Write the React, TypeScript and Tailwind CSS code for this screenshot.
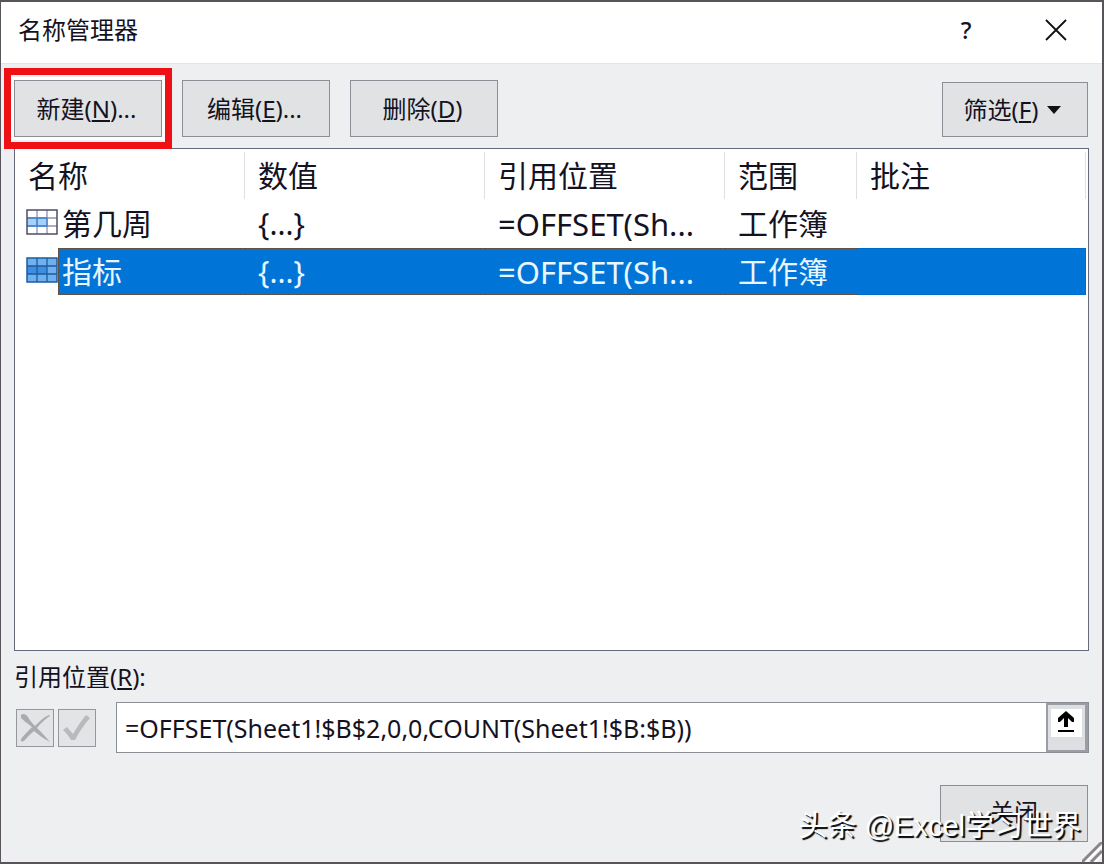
import type { ReactNode } from "react";

const columns = [
  { title: "名称", width: "w-[230px]" },
  { title: "数值", width: "w-[240px]" },
  { title: "引用位置", width: "w-[240px]" },
  { title: "范围", width: "w-[132px]" },
  { title: "批注", width: "" },
];

const names = [
  { name: "第几周", value: "{...}", refersTo: "=OFFSET(Sh...", scope: "工作簿", comment: "", selected: false },
  { name: "指标", value: "{...}", refersTo: "=OFFSET(Sh...", scope: "工作簿", comment: "", selected: true },
];

const buttonStyle = "border border-[#8b8e95] bg-[#e1e2e3] text-2xl leading-8 text-[#14121f]";

function Hotkey({ letter }: { letter: string }) {
  return (
    <>
      (<span className="underline decoration-2 underline-offset-2">{letter}</span>)
    </>
  );
}

function DialogButton({ children }: { children: ReactNode }) {
  return <button className={`h-[57px] w-[148px] pr-[3px] ${buttonStyle}`}>{children}</button>;
}

function RangeIcon({ selected }: { selected: boolean }) {
  return (
    <svg width="32" height="26" viewBox="0 0 32 26" className="mb-1 shrink-0" aria-hidden="true">
      <rect x="1" y="1" width="30" height="24" fill={selected ? "#6eb1ee" : "#ffffff"} />
      <rect x="1" y="9" width="20" height="8" fill={selected ? "#3c8fdf" : "#a5d0f7"} />
      <path
        d="M1 9H31M1 17H31M11 1V25M21 1V25"
        stroke={selected ? "#1f5ba0" : "#8d92b4"}
        strokeWidth="1.3"
        fill="none"
      />
      {!selected && <path d="M1 9H21V17H1M11 9V17" stroke="#3d82cf" strokeWidth="1.3" fill="none" />}
      <rect x="1" y="1" width="30" height="24" fill="none" stroke={selected ? "#1f5ba0" : "#4e4c67"} strokeWidth="1.5" />
    </svg>
  );
}

function TitleBar() {
  return (
    <header className="flex h-[62px] shrink-0 items-center border-b border-[#dfe5e9] bg-white pr-[26px] pb-[5px] pl-[17px]">
      <h1 className="flex-1 text-2xl leading-8">名称管理器</h1>
      <button aria-label="帮助" className="w-10 text-2xl leading-8 font-medium">
        ?
      </button>
      <button aria-label="关闭窗口" className="ml-[50px] flex h-10 w-10 items-center justify-center">
        <svg width="22" height="22" viewBox="0 0 22 22">
          <path d="M1 1L21 21M21 1L1 21" stroke="#111" strokeWidth="1.8" fill="none" />
        </svg>
      </button>
    </header>
  );
}

function NameList() {
  return (
    <div className="flex-1 border border-[#666a7c] bg-white pr-[2px]">
      <table className="w-full table-fixed border-separate border-spacing-0 text-left text-3xl leading-10">
        <thead>
          <tr className="h-[51px]">
            {columns.map((col) => (
              <th key={col.title} className={`p-0 font-normal ${col.width}`}>
                <div className="mt-[2px] h-[47px] border-r border-[#dde1e6] pt-1 pl-[13px]">{col.title}</div>
              </th>
            ))}
          </tr>
        </thead>
        <tbody>
          {names.map((row) => {
            const cell = row.selected
              ? "h-[47px] border-y border-dotted border-[#5a4a3c] bg-[#0075d7] p-0 pl-[13px] text-[#e8f7ff]"
              : "h-12 p-0 pl-[13px]";

            return (
              <tr key={row.name} aria-selected={row.selected}>
                <td className="p-0 pl-[11px]">
                  <div className="flex items-center">
                    <RangeIcon selected={row.selected} />
                    <span
                      className={
                        row.selected
                          ? "flex h-[47px] flex-1 items-center border-y border-l border-dotted border-[#5a4a3c] bg-[#0075d7] pl-[3px] text-[#e8f7ff]"
                          : "flex h-12 flex-1 items-center pl-1"
                      }
                    >
                      {row.name}
                    </span>
                  </div>
                </td>
                <td className={cell}>{row.value}</td>
                <td className={`${cell} text-[31px]`}>{row.refersTo}</td>
                <td className={cell}>{row.scope}</td>
                <td className={row.selected ? `${cell} border-r` : cell}>{row.comment}</td>
              </tr>
            );
          })}
        </tbody>
      </table>
    </div>
  );
}

function RefersToBar() {
  return (
    <div className="mt-[9px] flex items-center">
      <div className="ml-[2px] flex gap-1">
        <button aria-label="取消" className="flex h-[38px] w-[38px] items-center justify-center border border-[#94979d] bg-[#e3e4e6]">
          <svg width="32" height="32" viewBox="0 0 32 32">
            <path
              d="M2 3C4 1 7 2 9 5C11 9 14 12 16 14C20 10 25 5 30 3L31 4C26 7 21 12 18 16C23 21 27 25 31 30C25 27 20 23 15 19C11 22 8 26 5 29C3 30 1 29 2 27C5 23 9 19 13 15C9 12 4 8 2 6Z"
              fill="#aaabae"
            />
          </svg>
        </button>
        <button aria-label="输入" className="flex h-[38px] w-[38px] items-center justify-center border border-[#94979d] bg-[#e3e4e6]">
          <svg width="32" height="32" viewBox="0 0 32 32">
            <path d="M2 18L6 15L12 22C16 15 21 8 25 3L29 6C23 13 18 20 14 28H10C8 24 5 21 2 18Z" fill="#b9babd" />
          </svg>
        </button>
      </div>
      <div className="ml-5 flex h-[51px] flex-1 border border-[#8b8e95] bg-white">
        <input
          id="refers-to"
          type="text"
          defaultValue="=OFFSET(Sheet1!$B$2,0,0,COUNT(Sheet1!$B:$B))"
          className="min-w-0 flex-1 bg-white pl-2 text-[25px] leading-8 outline-none"
        />
        <button
          aria-label="折叠对话框"
          className="flex w-[42px] items-start justify-center border-2 border-r-[3px] border-[#9a9da4] bg-[#dedfe2] pt-1"
        >
          <svg width="31" height="28" viewBox="0 0 31 28">
            <rect width="31" height="28" fill="#fff" />
            <path d="M15 2L23 9V13H21L17 9V18H13V9L9 13H7V9Z" fill="#000" />
            <path d="M7 22H23" stroke="#000" strokeWidth="2" />
          </svg>
        </button>
      </div>
    </div>
  );
}

export default function App() {
  return (
    <div className="relative flex min-h-screen flex-col border-t-2 border-r-2 border-b-2 border-l border-[#59535b] bg-[#eeeff1] font-['Noto_Sans','Noto_Sans_CJK_SC',sans-serif] text-[#14121f]">
      <TitleBar />

      <main className="flex flex-1 flex-col px-[13px] pt-4 pb-5">
        <div className="flex items-end gap-5">
          <div className="relative shadow-[0_0_0_3px_#fff]">
            <DialogButton>
              新建
              <Hotkey letter="N" />
              ...
            </DialogButton>
            {/* red callout around the New button */}
            <div className="pointer-events-none absolute -inset-x-[10px] -inset-y-3 border-[7px] border-[#ef1016]" />
          </div>
          <DialogButton>
            编辑
            <Hotkey letter="E" />
            ...
          </DialogButton>
          <DialogButton>
            删除
            <Hotkey letter="D" />
          </DialogButton>
          <button className={`mr-[1px] ml-auto flex h-[55px] w-[146px] items-center justify-center gap-2 pr-1 ${buttonStyle}`}>
            <span>
              筛选
              <Hotkey letter="F" />
            </span>
            <svg width="16" height="10" viewBox="0 0 16 10">
              <path d="M1 1H15L8 9Z" fill="#111" />
            </svg>
          </button>
        </div>

        <div className="mt-[11px] flex flex-1 flex-col">
          <NameList />
        </div>

        <label htmlFor="refers-to" className="mt-[10px] text-2xl leading-8">
          引用位置
          <Hotkey letter="R" />:
        </label>
        <RefersToBar />

        <div className="mt-8 mr-[1px] flex justify-end">
          <button className={`h-[57px] w-[148px] pb-1 ${buttonStyle}`}>关闭</button>
        </div>
      </main>

      <p className="pointer-events-none absolute right-[21px] bottom-4 font-['Liberation_Sans','Noto_Sans_CJK_SC',sans-serif] text-[29px] leading-10 text-white [text-shadow:2px_2px_1px_#000]">
        头条 @Excel学习世界
      </p>
      <svg width="20" height="20" viewBox="0 0 20 20" className="absolute right-0 bottom-0" aria-hidden="true">
        <path d="M0 20L20 0M9 20L20 9" stroke="#8b8589" strokeWidth="3" />
        <path d="M4 20L20 4M13 20L20 13" stroke="#fff" strokeWidth="2" />
      </svg>
    </div>
  );
}
